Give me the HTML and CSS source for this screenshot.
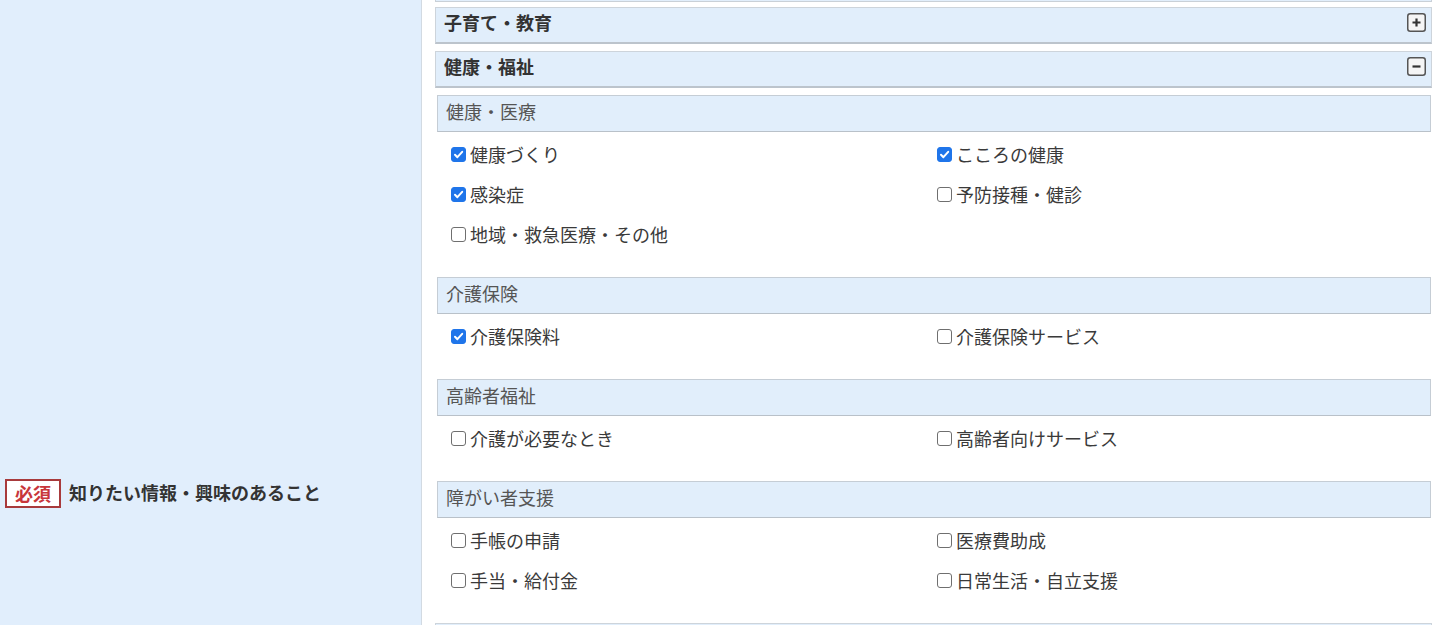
FILE: index.html
```html
<!DOCTYPE html>
<html lang="ja">
<head>
<meta charset="utf-8">
<title>知りたい情報・興味のあること</title>
<link rel="stylesheet" href="styles.css">
</head>
<body>
<div class="row">
  <div class="label-col">
    <span class="badge">必須</span>
    <span class="label-text">知りたい情報・興味のあること</span>
  </div>
  <div class="field-col">
    <div class="prev-heading"></div>

    <div class="heading">
      <span class="heading-text">子育て・教育</span>
      <svg class="toggle" width="19" height="19" viewBox="0 0 19 19"><rect x="0.75" y="0.75" width="17.5" height="17.5" rx="2.5" fill="#f5f5f5" stroke="#555" stroke-width="1.5"/><path d="M9.5 5.5v8M5.5 9.5h8" stroke="#333" stroke-width="2.2" fill="none"/></svg>
    </div>

    <div class="heading">
      <span class="heading-text">健康・福祉</span>
      <svg class="toggle" width="19" height="19" viewBox="0 0 19 19"><rect x="0.75" y="0.75" width="17.5" height="17.5" rx="2.5" fill="#f5f5f5" stroke="#555" stroke-width="1.5"/><path d="M5.5 9.5h8" stroke="#333" stroke-width="2.2" fill="none"/></svg>
    </div>

    <div class="section">
      <div class="sub">健康・医療</div>
      <div class="items">
        <label class="item"><span class="box checked"><svg width="13" height="13" viewBox="0 0 13 13"><path d="M3 6.8l2.4 2.4 4.8-5.4" stroke="#fff" stroke-width="2" fill="none" stroke-linecap="round" stroke-linejoin="round"/></svg></span>健康づくり</label>
        <label class="item"><span class="box checked"><svg width="13" height="13" viewBox="0 0 13 13"><path d="M3 6.8l2.4 2.4 4.8-5.4" stroke="#fff" stroke-width="2" fill="none" stroke-linecap="round" stroke-linejoin="round"/></svg></span>こころの健康</label>
        <label class="item"><span class="box checked"><svg width="13" height="13" viewBox="0 0 13 13"><path d="M3 6.8l2.4 2.4 4.8-5.4" stroke="#fff" stroke-width="2" fill="none" stroke-linecap="round" stroke-linejoin="round"/></svg></span>感染症</label>
        <label class="item"><span class="box"></span>予防接種・健診</label>
        <label class="item"><span class="box"></span>地域・救急医療・その他</label>
      </div>
    </div>

    <div class="section">
      <div class="sub">介護保険</div>
      <div class="items">
        <label class="item"><span class="box checked"><svg width="13" height="13" viewBox="0 0 13 13"><path d="M3 6.8l2.4 2.4 4.8-5.4" stroke="#fff" stroke-width="2" fill="none" stroke-linecap="round" stroke-linejoin="round"/></svg></span>介護保険料</label>
        <label class="item"><span class="box"></span>介護保険サービス</label>
      </div>
    </div>

    <div class="section">
      <div class="sub">高齢者福祉</div>
      <div class="items">
        <label class="item"><span class="box"></span>介護が必要なとき</label>
        <label class="item"><span class="box"></span>高齢者向けサービス</label>
      </div>
    </div>

    <div class="section">
      <div class="sub">障がい者支援</div>
      <div class="items">
        <label class="item"><span class="box"></span>手帳の申請</label>
        <label class="item"><span class="box"></span>医療費助成</label>
        <label class="item"><span class="box"></span>手当・給付金</label>
        <label class="item"><span class="box"></span>日常生活・自立支援</label>
      </div>
    </div>

    <div class="heading next"></div>
  </div>
</div>
</body>
</html>
```

FILE: styles.css
```css
html, body {
  margin: 0;
  padding: 0;
  background: #fff;
  overflow: hidden;
}

body {
  font-family: "Noto Sans CJK JP", "Noto Sans", sans-serif;
  color: #333;
}

.row {
  display: flex;
  min-height: 700px;
}

.label-col {
  width: 422px;
  flex: none;
  background: #e1eefc;
  border-right: 1px solid #d2dae2;
  box-sizing: border-box;
  padding: 479px 0 0 5px;
  display: flex;
  align-items: flex-start;
  gap: 8px;
}

.badge {
  display: inline-block;
  border: 2px solid #a83a3c;
  background: #fff;
  color: #c8363b;
  font-weight: bold;
  font-size: 18px;
  line-height: 24px;
  padding: 0 8px 1px;
}

.label-text {
  font-weight: bold;
  font-size: 18px;
  line-height: 26px;
  color: #333;
}

.field-col {
  flex: 1;
  padding: 0 10px 0 13px;
}

.prev-heading {
  height: 1px;
  border: 1px solid #c9d0d7;
  border-top: none;
  background: #e1eefb;
  margin-bottom: 5px;
}

.heading {
  display: flex;
  height: 37px;
  box-sizing: border-box;
  border: 1px solid #cdd4db;
  border-bottom: 2px solid #bcc4cc;
  background: #e1eefb;
  padding-left: 8px;
  margin-bottom: 7px;
}

.heading-text {
  font-size: 18px;
  font-weight: bold;
  line-height: 29px;
  color: #333;
}

.toggle {
  margin: 5px 5px 0 auto;
  flex: none;
}

.section {
  margin: 0 1px 0 2px;
}

.sub {
  height: 37px;
  box-sizing: border-box;
  border: 1px solid #c5cdd5;
  border-bottom-color: #b9c1c9;
  background: #e1eefb;
  padding-left: 8px;
  font-size: 18px;
  line-height: 30px;
  color: #555;
}

.items {
  display: grid;
  grid-template-columns: 486px 1fr;
  grid-auto-rows: 40px;
  padding: 4px 0 21px 14px;
}

.item {
  display: flex;
  align-items: center;
  gap: 4px;
  font-size: 18px;
  color: #3a3a3a;
  padding-bottom: 4px;
}

.box {
  width: 15px;
  height: 15px;
  box-sizing: border-box;
  border: 1px solid #6f6f6f;
  border-radius: 3px;
  background: #fff;
  display: flex;
  align-items: center;
  justify-content: center;
  flex: none;
  margin-top: 1px;
}

.box.checked {
  background: #1f75ea;
  border-color: #1f75ea;
}

.heading.next {
  margin-bottom: 0;
}
```
